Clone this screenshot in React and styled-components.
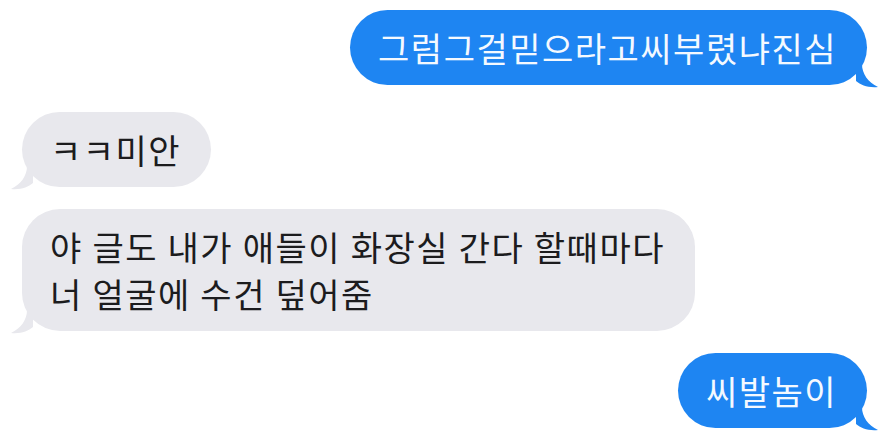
import React from "react";
import styled, { createGlobalStyle } from "styled-components";

const GlobalStyle = createGlobalStyle`
	html, body {
		margin: 0;
		padding: 0;
		background: #ffffff;
	}
	body {
		font-family: "Noto Sans CJK KR", "Noto Sans", sans-serif;
	}
`;

const messages = [
	{ id: 1, mine: true, text: "그럼그걸믿으라고씨부렸냐진심", after: 27 },
	{ id: 2, mine: false, text: "ㅋㅋ미안", after: 22 },
	{ id: 3, mine: false, text: "야 글도 내가 애들이 화장실 간다 할때마다\n너 얼굴에 수건 덮어줌", after: 22 },
	{ id: 4, mine: true, text: "씨발놈이", after: 0 },
];

function Tail({ mine }) {
	return (
		<TailSvg $mine={mine} viewBox="0 0 24 24" width="24" height="24">
			<path
				d={
					mine
						? "M0 0 L6 0 C6 10 12 18 22 23 C12 24 5 21 0 17 Z"
						: "M24 0 L18 0 C18 10 12 18 2 23 C12 24 19 21 24 17 Z"
				}
				fill={mine ? "#1e85f2" : "#e8e8ed"}
			/>
		</TailSvg>
	);
}

function App() {
	return (
		<>
			<GlobalStyle />
			<Thread>
				{messages.map((m) => (
					<Row key={m.id} $mine={m.mine} $after={m.after}>
						<Bubble $mine={m.mine}>
							{m.text}
							<Tail mine={m.mine} />
						</Bubble>
					</Row>
				))}
			</Thread>
		</>
	);
}

export default App;

const Thread = styled.div`
	width: 885px;
	height: 437px;
	box-sizing: border-box;
	padding: 10px 18px 0 22px;
	display: flex;
	flex-direction: column;
	overflow: hidden;
`;

const Row = styled.div`
	display: flex;
	justify-content: ${(p) => (p.$mine ? "flex-end" : "flex-start")};
	margin-bottom: ${(p) => p.$after}px;
`;

const Bubble = styled.div`
	position: relative;
	white-space: pre-line;
	font-size: 34px;
	line-height: 47px;
	letter-spacing: 1.5px;
	word-spacing: 0.5px;
	padding: 14px 30px 14px 28px;
	border-radius: 38px;
	background: ${(p) => (p.$mine ? "#1e85f2" : "#e8e8ed")};
	color: ${(p) => (p.$mine ? "#f4f9ff" : "#1c1c1e")};
`;

const TailSvg = styled.svg`
	position: absolute;
	bottom: -3px;
	${(p) => (p.$mine ? "right: -13px;" : "left: -13px;")}
`;
